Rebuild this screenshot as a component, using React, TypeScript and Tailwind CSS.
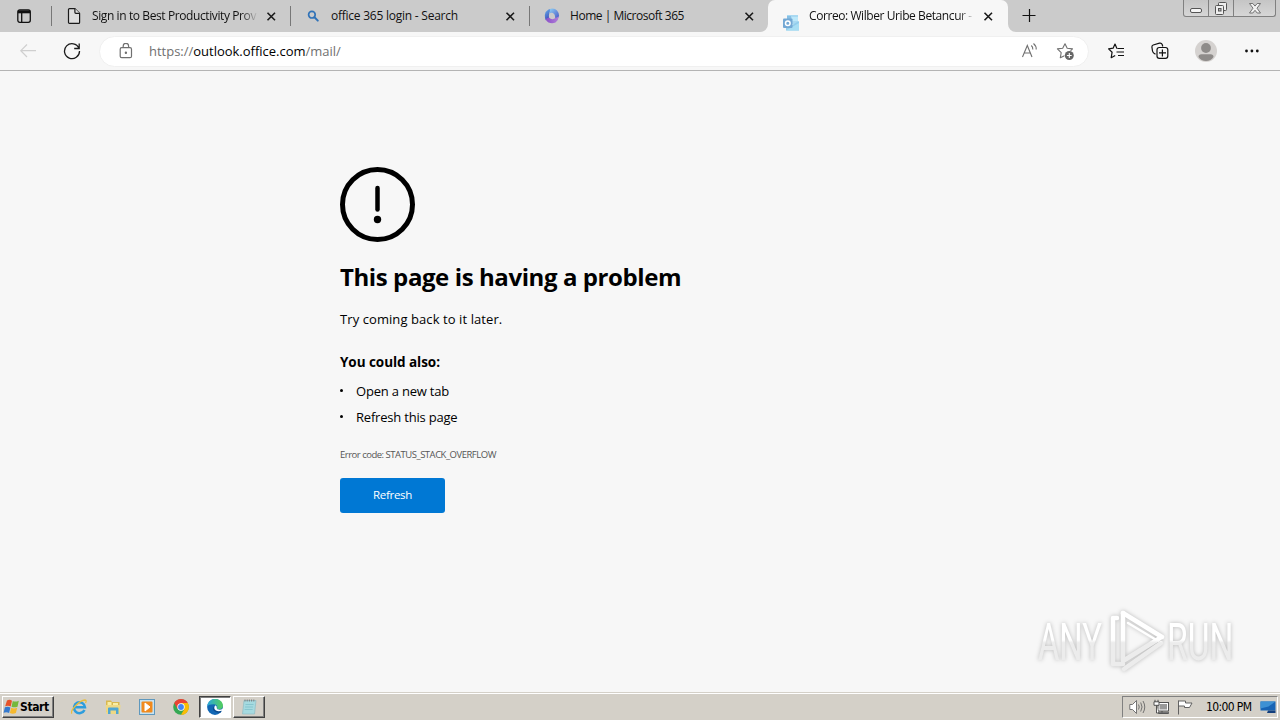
import type { ReactNode } from 'react';

function CloseIcon() {
  return (
    <svg className="h-[10px] w-[10px] shrink-0" viewBox="0 0 10 10" fill="none" stroke="#1a1a1a" strokeWidth="1.6">
      <path d="M1.500 1.700l7.500 7.500M9 1.700l-7.500 7.500" />
    </svg>
  );
}

function PageIcon() {
  return (
    <svg className="h-4 w-4" viewBox="0 0 16 16" fill="#dedede" stroke="#1a1a1a" strokeWidth="1.2" strokeLinejoin="round">
      <path d="M3.500.6h5.400l4.700 4.700v9.100a1 1 0 0 1-1 1H3.500a1 1 0 0 1-1-1V1.600a1 1 0 0 1 1-1z" />
      <path d="M8.900.6v3.700a1 1 0 0 0 1 1h3.700" />
    </svg>
  );
}

function SearchIcon() {
  return (
    <svg className="h-4 w-4" viewBox="0 0 16 16" fill="none" stroke="#3173b8" strokeWidth="1.7" strokeLinecap="round">
      <circle cx="6.900" cy="6.700" r="3.300" />
      <path d="M9.500 9.300l3.300 3.300" strokeWidth="2" />
    </svg>
  );
}

function MicrosoftIcon() {
  return (
    <svg className="h-4 w-4" viewBox="0 0 16 16">
      <defs>
        <linearGradient id="msA" x1="0" y1="0" x2="0.5" y2="1">
          <stop offset="0" stopColor="#69b4ec" />
          <stop offset="1" stopColor="#3d4bb8" />
        </linearGradient>
        <linearGradient id="msB" x1="0" y1="0" x2="1" y2="0">
          <stop offset="0" stopColor="#8a4fc8" />
          <stop offset="1" stopColor="#b07fd8" />
        </linearGradient>
        <linearGradient id="msC" x1="0" y1="0" x2="1" y2="1">
          <stop offset="0" stopColor="#8fd0f5" />
          <stop offset="1" stopColor="#4656c4" />
        </linearGradient>
      </defs>
      <path d="M7.500.8C5.500 4 4.500 6 5 10.500L1.800 12.200Q.7 10 .8 7 1.500 3 4.500 1.500z" fill="url(#msA)" />
      <path d="M6 1.200Q10-.5 13 2.500q2 2 2.100 5.500L13.500 11l-2.300-.5q.3-4-2.200-5.500-2-.8-3.500.5z" fill="url(#msC)" />
      <path d="M1.500 11l3.500-1.500q2.500 2.700 5.500 1l4.300-2q-.3 4-3.300 6-3.500 1.500-7 0Q2.500 13.500 1.500 11z" fill="url(#msB)" />
    </svg>
  );
}

function OutlookIcon() {
  return (
    <svg className="mt-[13px] h-4 w-4" viewBox="0 0 16 16">
      <path d="M4 0h11v9H4z" fill="#a9d9f2" />
      <path d="M4 1h4v4H4z" fill="#87bfe4" />
      <path d="M9 2h6v4H9z" fill="#bce8fa" />
      <path d="M3 7l6 3 7-4v9.500H3z" fill="#92cdec" />
      <path d="M3 15.500L16 8v7.500z" fill="#a7def4" />
      <rect x="0" y="3.500" width="9.500" height="9.500" rx="1" fill="#73a8d4" />
      <circle cx="4.800" cy="8.200" r="2.300" fill="none" stroke="#fff" strokeWidth="1.500" />
    </svg>
  );
}

type TabProps = {
  title: string;
  icon: ReactNode;
  active?: boolean;
  fade?: boolean;
  last?: boolean;
  textClass: string;
};

function Tab({ title, icon, active, fade, last, textClass }: TabProps) {
  return (
    <div
      className={
        active
          ? 'relative flex h-8 w-[240px] items-center rounded-t-[7px] bg-[#f7f7f7] pl-[15px]'
          : `relative flex h-8 items-center pl-[14px] ${last ? 'w-[238px]' : 'w-[239px]'}`
      }
    >
      <div className="mr-[10px] w-4 shrink-0">{icon}</div>
      <div
        className={`mr-2 w-[166px] overflow-hidden text-[12px] leading-4 whitespace-nowrap text-[#111] ${textClass} ${
          fade ? '[mask-image:linear-gradient(to_right,black_90%,transparent)]' : ''
        }`}
      >
        {title}
      </div>
      <CloseIcon />
      {!active && !last && <span className="absolute top-[6px] right-0 h-5 w-px bg-[#777]" />}
      {active && (
        <>
          <svg className="absolute bottom-0 -left-2 h-2 w-2" viewBox="0 0 8 8">
            <path d="M8 0v8H0a8 8 0 0 0 8-8z" fill="#f7f7f7" />
          </svg>
          <svg className="absolute -right-2 bottom-0 h-2 w-2" viewBox="0 0 8 8">
            <path d="M0 0v8h8a8 8 0 0 1-8-8z" fill="#f7f7f7" />
          </svg>
        </>
      )}
    </div>
  );
}

function WindowButtons() {
  return (
    <div className="mr-1 ml-auto flex h-[17px] self-start rounded-b-[3px] border border-t-0 border-[#808080] bg-gradient-to-b from-[#c5c5c5] to-[#d6d6d6]">
      <div className="flex w-[25px] items-center justify-center border-r border-[#808080]">
        <svg className="h-4 w-4" viewBox="0 0 16 16">
          <rect x="2.500" y="8.500" width="11" height="4" rx="1.500" fill="#f5f5f5" stroke="#555" />
        </svg>
      </div>
      <div className="flex w-[25px] items-center justify-center border-r border-[#808080]">
        <svg className="h-4 w-4" viewBox="0 0 16 16" fill="#eee" stroke="#555">
          <rect x="5.500" y="2.500" width="8" height="8" rx="1" />
          <rect x="2.500" y="5.500" width="8" height="9" rx="1" />
          <rect x="5.500" y="8.500" width="2.500" height="2.500" fill="#bbb" />
        </svg>
      </div>
      <div className="flex w-[41px] items-center justify-center">
        <svg className="h-4 w-4" viewBox="0 0 16 16">
          <path
            d="M2.500 3.500h3.300L8 6.100l2.200-2.600h3.300L10 8.200l3.500 4.800h-3.300L8 10.300 5.800 13H2.500L6 8.200z"
            fill="#f2f2f2"
            stroke="#666"
            strokeWidth=".9"
          />
        </svg>
      </div>
    </div>
  );
}

function TabStrip() {
  return (
    <div className="flex h-8 bg-[#cbcbcb]">
      <div className="relative flex w-[52px] items-center pl-[17px]">
        <svg className="h-4 w-4" viewBox="0 0 16 16" fill="none" stroke="#111" strokeWidth="1.300">
          <rect x=".8" y="1.800" width="12.500" height="12.500" rx="2" />
          <path d="M1 3.800h12" strokeWidth="3" />
          <path d="M4.700 5v9" />
        </svg>
        <span className="absolute top-[6px] right-0 h-5 w-px bg-[#777]" />
      </div>
      <Tab title="Sign in to Best Productivity Prov" icon={<PageIcon />} fade textClass="tracking-[-0.4px]" />
      <Tab title="office 365 login - Search" icon={<SearchIcon />} textClass="tracking-[-0.24px]" />
      <Tab title="Home | Microsoft 365" icon={<MicrosoftIcon />} last textClass="tracking-[-0.47px]" />
      <Tab title="Correo: Wilber Uribe Betancur -" icon={<OutlookIcon />} active fade textClass="tracking-[-0.42px]" />
      <div className="flex w-[42px] items-center justify-center">
        <svg className="h-4 w-4" viewBox="0 0 16 16" stroke="#111" strokeWidth="1.200">
          <path d="M1.500 7.500h13M8.500 1v13" />
        </svg>
      </div>
      <WindowButtons />
    </div>
  );
}

function Toolbar() {
  return (
    <div className="flex h-[39px] items-center border-b border-[#b4b4b4] bg-[#f7f7f7]">
      <svg className="ml-[19px] h-[18px] w-[18px]" viewBox="0 0 18 18" fill="none" stroke="#cfcfcf" strokeWidth="1.200">
        <path d="M8 2.500L1.800 8.700 8 15M1.800 8.700H17" />
      </svg>
      <svg className="ml-[26px] h-[18px] w-[18px]" viewBox="0 0 18 18" fill="none" stroke="#1a1a1a" strokeWidth="1.300">
        <path d="M15.900 6.200A7.500 7.500 0 1 0 16.500 9M16.200 1.500v5h-5" />
      </svg>
      <div className="ml-[18px] flex h-[31px] w-[990px] items-center rounded-full border border-[#f0f0f0] bg-white">
        <svg className="ml-[19px] h-4 w-4" viewBox="0 0 16 16" fill="none" stroke="#707070" strokeWidth="1.200">
          <rect x="1.200" y="4.700" width="11.300" height="10" rx="1.500" />
          <path d="M4.200 4.500V3a2.700 2.700 0 0 1 5.400 0v1.500" />
          <circle cx="6.900" cy="9.700" r=".6" fill="#555" />
        </svg>
        <div className="ml-[14px] text-[13px] leading-5 tracking-[-0.01px] whitespace-nowrap text-[#707070]">
          https://<span className="text-black">outlook.office.com</span>/mail/
        </div>
        <svg className="ml-auto h-[18px] w-[18px]" viewBox="0 0 18 18" fill="none" stroke="#707070" strokeWidth="1.100">
          <path d="M2.500 15L7.300 3.500 12 15M4.300 11h6.200" />
          <path d="M11.300 3.500q1.700 1.500 1.500 4M13.500 1.500q3 2.500 2.700 6" />
        </svg>
        <svg className="mr-[13px] ml-[18px] h-[19px] w-[19px]" viewBox="0 0 19 19">
          <path
            d="M9 1.700l2.200 4.500 5.300.7-3.800 3.700.9 5.200L9 13.400l-4.700 2.400.9-5.200L1.400 6.900l5.300-.7z"
            fill="none"
            stroke="#707070"
            strokeWidth="1.100"
            strokeLinejoin="round"
          />
          <circle cx="13.300" cy="13.500" r="5" fill="#fff" />
          <circle cx="13.300" cy="13.500" r="4.500" fill="#666" />
          <path d="M10.900 13.500h4.800M13.300 11.100v4.800" stroke="#fff" strokeWidth="1.100" />
        </svg>
      </div>
      <svg className="ml-[18px] h-[18px] w-[18px]" viewBox="0 0 18 18" fill="none" stroke="#111" strokeWidth="1.200" strokeLinejoin="round">
        <path d="M10.800 6.500L9.800 6.200 8 2 6.100 6.200 1.600 6.900l3.500 3.300-.9 5.500 4-2.200" />
        <path d="M11 6.500h6M9.500 10H17M11 13.500h6" />
      </svg>
      <svg className="ml-[26px] h-[18px] w-[18px]" viewBox="0 0 18 18" fill="none" stroke="#111" strokeWidth="1.200">
        <path d="M4.500 12.200L3 11.300Q1.800 10.500 1.500 9L.9 5Q.8 3.500 2.200 3L8.500 1.200Q10.500.8 11.200 2.500l.6 2" />
        <rect x="6" y="5.500" width="10.800" height="10.800" rx="2.300" />
        <path d="M8 10.900h7M11.400 7.500v7" />
      </svg>
      <svg className="ml-[26px] h-[22px] w-[22px]" viewBox="0 0 22 22">
        <circle cx="11" cy="11" r="11" fill="#d5d2d0" />
        <circle cx="11" cy="8" r="4.900" fill="#8e8b89" />
        <path d="M3.500 17q0-2.500 3-2.700h9q3 .2 3 2.700-2.500 4-7.500 4t-7.500-4z" fill="#8e8b89" />
      </svg>
      <svg className="ml-[28px] h-1 w-[14px]" viewBox="0 0 14 4" fill="#111">
        <circle cx="1.500" cy="2" r="1.400" />
        <circle cx="6.900" cy="2" r="1.400" />
        <circle cx="12.300" cy="2" r="1.400" />
      </svg>
    </div>
  );
}

function Watermark() {
  return (
    <svg
      className="absolute right-[42px] bottom-[18px] h-[68px] w-[204px] overflow-visible drop-shadow-[0_0_2px_rgba(0,0,0,0.25)]"
      viewBox="0 0 204 68"
    >
      <defs>
        <linearGradient id="wm" x1="0" y1="0" x2="0" y2="68" gradientUnits="userSpaceOnUse">
          <stop offset="0.5" stopColor="#ffffff" />
          <stop offset="0.54" stopColor="#ececec" />
        </linearGradient>
        {/* same split, shifted to the text baseline */}
        <linearGradient id="wmText" x1="0" y1="-54" x2="0" y2="14" gradientUnits="userSpaceOnUse">
          <stop offset="0.5" stopColor="#ffffff" />
          <stop offset="0.54" stopColor="#ececec" />
        </linearGradient>
      </defs>
      <g fill="url(#wmText)" fontFamily="Roboto, sans-serif" fontSize="52" fontWeight="400">
        <text transform="translate(4 54) scale(0.63 1)">ANY</text>
        <text transform="translate(133 54) scale(0.645 1)">RUN</text>
      </g>
      <g fill="none" stroke="url(#wm)" strokeWidth="4.500" strokeLinecap="round" strokeLinejoin="round">
        <path d="M83 12h-4v46h10" />
        <path d="M89 7v48l37-23" />
        <path d="M89 7l39 24" />
        <path d="M94 17l30 18" strokeWidth="2.500" />
        <path d="M90 63l37-26" />
      </g>
    </svg>
  );
}

function ErrorPage() {
  return (
    <main className="relative h-[621px] bg-[#f7f7f7] pt-24 pl-[340px] text-black">
      <svg className="h-[75px] w-[75px]" viewBox="0 0 75 75">
        <circle cx="37.500" cy="37.500" r="35" fill="none" stroke="#000" strokeWidth="5" />
        <path d="M37.500 21v21.500" stroke="#000" strokeWidth="4.500" strokeLinecap="round" />
        <circle cx="37.500" cy="52.500" r="3.700" />
      </svg>
      <h1 className="mt-[19px] text-[24px] leading-8 font-bold tracking-[-0.41px]">This page is having a problem</h1>
      <p className="mt-4 text-[13px] leading-5 tracking-[0.08px]">Try coming back to it later.</p>
      <h2 className="mt-[23px] text-[13.5px] leading-5 font-bold tracking-[-0.05px]">You could also:</h2>
      <ul className="mt-[6px] text-[13px] leading-[26px]">
        <li className="flex items-center">
          <span className="mr-[13px] mb-[2px] h-[3px] w-[3px] rounded-full bg-black" />
          <span className="tracking-[-0.2px]">Open a new tab</span>
        </li>
        <li className="flex items-center">
          <span className="mr-[13px] mb-[2px] h-[3px] w-[3px] rounded-full bg-black" />
          <span className="tracking-[-0.2px]">Refresh this page</span>
        </li>
      </ul>
      <p className="mt-[17px] text-[9.5px] leading-4 tracking-[-0.49px] text-[#555]">Error code: STATUS_STACK_OVERFLOW</p>
      <button className="mt-[15px] block h-[35px] w-[105px] rounded-[3px] bg-[#0078d4] pb-[2px] text-[11.5px] tracking-[-0.3px] text-white">
        Refresh
      </button>
      <Watermark />
    </main>
  );
}

function ExplorerIcon() {
  return (
    <svg className="h-4 w-4" viewBox="0 0 16 16">
      <path d="M1 1.500h5l1 1.500h7.500v10H1z" fill="#d9b84f" />
      <path d="M2.500 3h4v5h-4zM8 4h5v4H8z" fill="#f8eda4" />
      <path d="M.5 6h15l-.7 9H1.500z" fill="#eed884" />
      <path d="M3 15V9.500q0-1 1-1h8.500q1 0 1 1V15h-2.500v-3.500H5.500V15z" fill="#4fa6d2" />
    </svg>
  );
}

function Taskbar() {
  return (
    <footer className="flex h-7 items-center border-t border-[#d4d0c8] bg-[#d4d0c8] shadow-[inset_0_1px_0_#fff]">
      <button className="ml-[2px] flex h-[22px] w-[52px] items-center border border-t-white border-r-[#404040] border-b-[#404040] border-l-white bg-[#d4d0c8] shadow-[inset_-1px_-1px_0_#808080]">
        <svg className="h-4 w-[17px] shrink-0" viewBox="0 0 17 16">
          <path d="M4 1.500q2.500-1.500 5 .2L7.700 7.500q-2.500-1.500-5.500-.3z" fill="#e6532a" />
          <path d="M9.800 2q2.500 1.300 6-.3L14.500 7.700q-3.300 1.300-6 0z" fill="#75b83c" />
          <path d="M1.900 8.300q3-1.200 5.500.2L6.100 14q-2.500-1.500-5.500-.3z" fill="#3479ce" />
          <path d="M8.200 8.800q2.700 1.300 6 0l-1.300 5.300q-3.200 1.400-6 0z" fill="#f6b92e" />
        </svg>
        <span className="text-[12px] leading-4 font-bold tracking-[-0.4px] text-black [font-family:'DejaVu_Sans_Condensed','DejaVu_Sans',sans-serif]">
          Start
        </span>
      </button>
      {/* quick launch */}
      <div className="ml-[17px] flex items-center gap-[18px]">
        <svg className="h-4 w-4" viewBox="0 0 16 16" fill="none">
          <path d="M13.500 11A5.500 5.500 0 1 1 14 8.300H4" stroke="#2d9ddd" strokeWidth="2.500" />
          <path d="M1 14.500C-1.500 12 8 1.500 14 1q2 .3.5 3" stroke="#e8bd3e" strokeWidth="1.300" />
        </svg>
        <ExplorerIcon />
        <svg className="h-4 w-4" viewBox="0 0 16 16">
          <rect x=".5" y=".5" width="15" height="15" fill="#c7e2f1" stroke="#5f98bd" />
          <rect x="2.500" y="2.500" width="11" height="11" rx="1" fill="#f18a1d" />
          <path d="M6 4l5 4-5 4z" fill="#fff" stroke="#fff" strokeLinejoin="round" />
        </svg>
        <svg className="h-4 w-4" viewBox="0 0 16 16">
          <circle cx="8" cy="8" r="7.800" fill="#34a853" />
          <path d="M1.200 4.100A7.800 7.800 0 0 1 14.800 4.100H8L4.600 10z" fill="#ea4335" />
          <path d="M14.800 4.100A7.800 7.800 0 0 1 8 15.800L11.400 10 8 4.100z" fill="#fbbc05" />
          <circle cx="8" cy="8" r="3.700" fill="#fff" />
          <circle cx="8" cy="8" r="2.900" fill="#4285f4" />
        </svg>
      </div>
      <div className="ml-[10px] flex h-[22px] w-8 items-center justify-center border border-t-[#404040] border-r-white border-b-white border-l-[#404040] bg-white shadow-[inset_1px_1px_0_#808080]">
        <svg className="h-4 w-4" viewBox="0 0 16 16">
          <defs>
            <linearGradient id="edge" x1="0" y1="0" x2="1" y2="0">
              <stop offset="0" stopColor="#2aa7dc" />
              <stop offset="1" stopColor="#54cf59" />
            </linearGradient>
          </defs>
          <circle cx="8" cy="8" r="7.900" fill="#1267b4" />
          <path d="M.2 7.500C1-2.500 15.500-2 15.900 6.700c0 3.500-3.500 4-6 3.100.9-1.300.6-4.600-3.300-4.600C3.500 5.200 1 6 .2 7.500z" fill="url(#edge)" />
          <path d="M7.300 7.100c-1.500 3 1.500 6.100 6.300 4.900l1.200-.5q-.8 1.500-2 2.500C8 14 3.500 10.500 7.300 7.100z" fill="#0c4a8c" />
          <path d="M8.300 6.300q2 1.200 1.500 3 .2 1.200 2 1.300 2.200.2 4.200-1.200v2.800l-1.500-.5q-3 1-5.500-.2-3-2-.7-5.200z" fill="#fff" />
        </svg>
      </div>
      <div className="ml-[2px] flex h-[22px] w-8 items-center justify-center border border-t-white border-r-[#404040] border-b-[#404040] border-l-white shadow-[inset_-1px_-1px_0_#808080]">
        <svg className="h-4 w-4" viewBox="0 0 16 16">
          <path d="M3 1.500h12L13.500 15h-12z" fill="#a6dae0" stroke="#8fbcc4" strokeWidth=".7" />
          <path d="M4.500 5.500h8M4 8h8M3.600 10.500h8" stroke="#7fc0ca" strokeWidth=".8" />
          <path d="M4 .5v2M6.200.5v2M8.400.5v2M10.600.5v2M12.800.5v2" stroke="#777" strokeWidth=".9" />
        </svg>
      </div>
      {/* notification area */}
      <div className="mr-[2px] ml-auto flex h-[22px] w-[156px] items-center border border-t-[#808080] border-r-white border-b-white border-l-[#808080] pl-[6px]">
        <svg className="h-4 w-[17px]" viewBox="0 0 17 16" fill="#fff" stroke="#666" strokeWidth=".9">
          <path d="M.8 5.500h2.700l4-4v13l-4-4H.8z" />
          <path d="M9.500 5.500q1.500 2.500 0 5M11.700 3.500q2.700 4.500 0 9M14 2q3.500 6 0 12" fill="none" />
        </svg>
        <svg className="ml-[7px] h-4 w-[17px]" viewBox="0 0 17 16" fill="#fff" stroke="#444" strokeWidth=".9">
          <rect x="5" y="3.500" width="10.500" height="8.500" />
          <rect x="6.500" y="5" width="7.500" height="5.500" fill="#999" stroke="none" />
          <path d="M5.500 14.500h10v-1.200h-10zM9 12v1.500M2 .8v2M5 .8v2M1 2.800h5v3.500H1zM3.500 6.500V14h2" />
        </svg>
        <svg className="ml-[7px] h-4 w-[17px]" viewBox="0 0 17 16" fill="#fff" stroke="#555" strokeWidth=".9">
          <path d="M1.500 1.500v14M1.500 2h7v2h6.500l-2.500 4.500H7.500V7h-6" />
        </svg>
        <span className="ml-[12px] text-[12px] leading-4 tracking-[-0.62px] whitespace-nowrap text-black [font-family:'DejaVu_Sans_Condensed','DejaVu_Sans',sans-serif]">
          10:00 PM
        </span>
        <svg className="mr-[1px] ml-auto h-[14px] w-4" viewBox="0 0 16 14">
          <path d="M.5 1.500h15v9H.5z" fill="#1764b5" />
          <path d="M.5 1.500h15l-7 5-8 2z" fill="#3d91d4" />
          <path d="M8 10.500h7.500V13H7z" fill="#123e7d" />
        </svg>
      </div>
    </footer>
  );
}

function App() {
  return (
    <div className="flex h-[720px] w-[1280px] flex-col overflow-hidden bg-[#f7f7f7] [font-family:'Open_Sans','Noto_Sans',sans-serif]">
      <TabStrip />
      <Toolbar />
      <ErrorPage />
      <Taskbar />
    </div>
  );
}

export default App;
